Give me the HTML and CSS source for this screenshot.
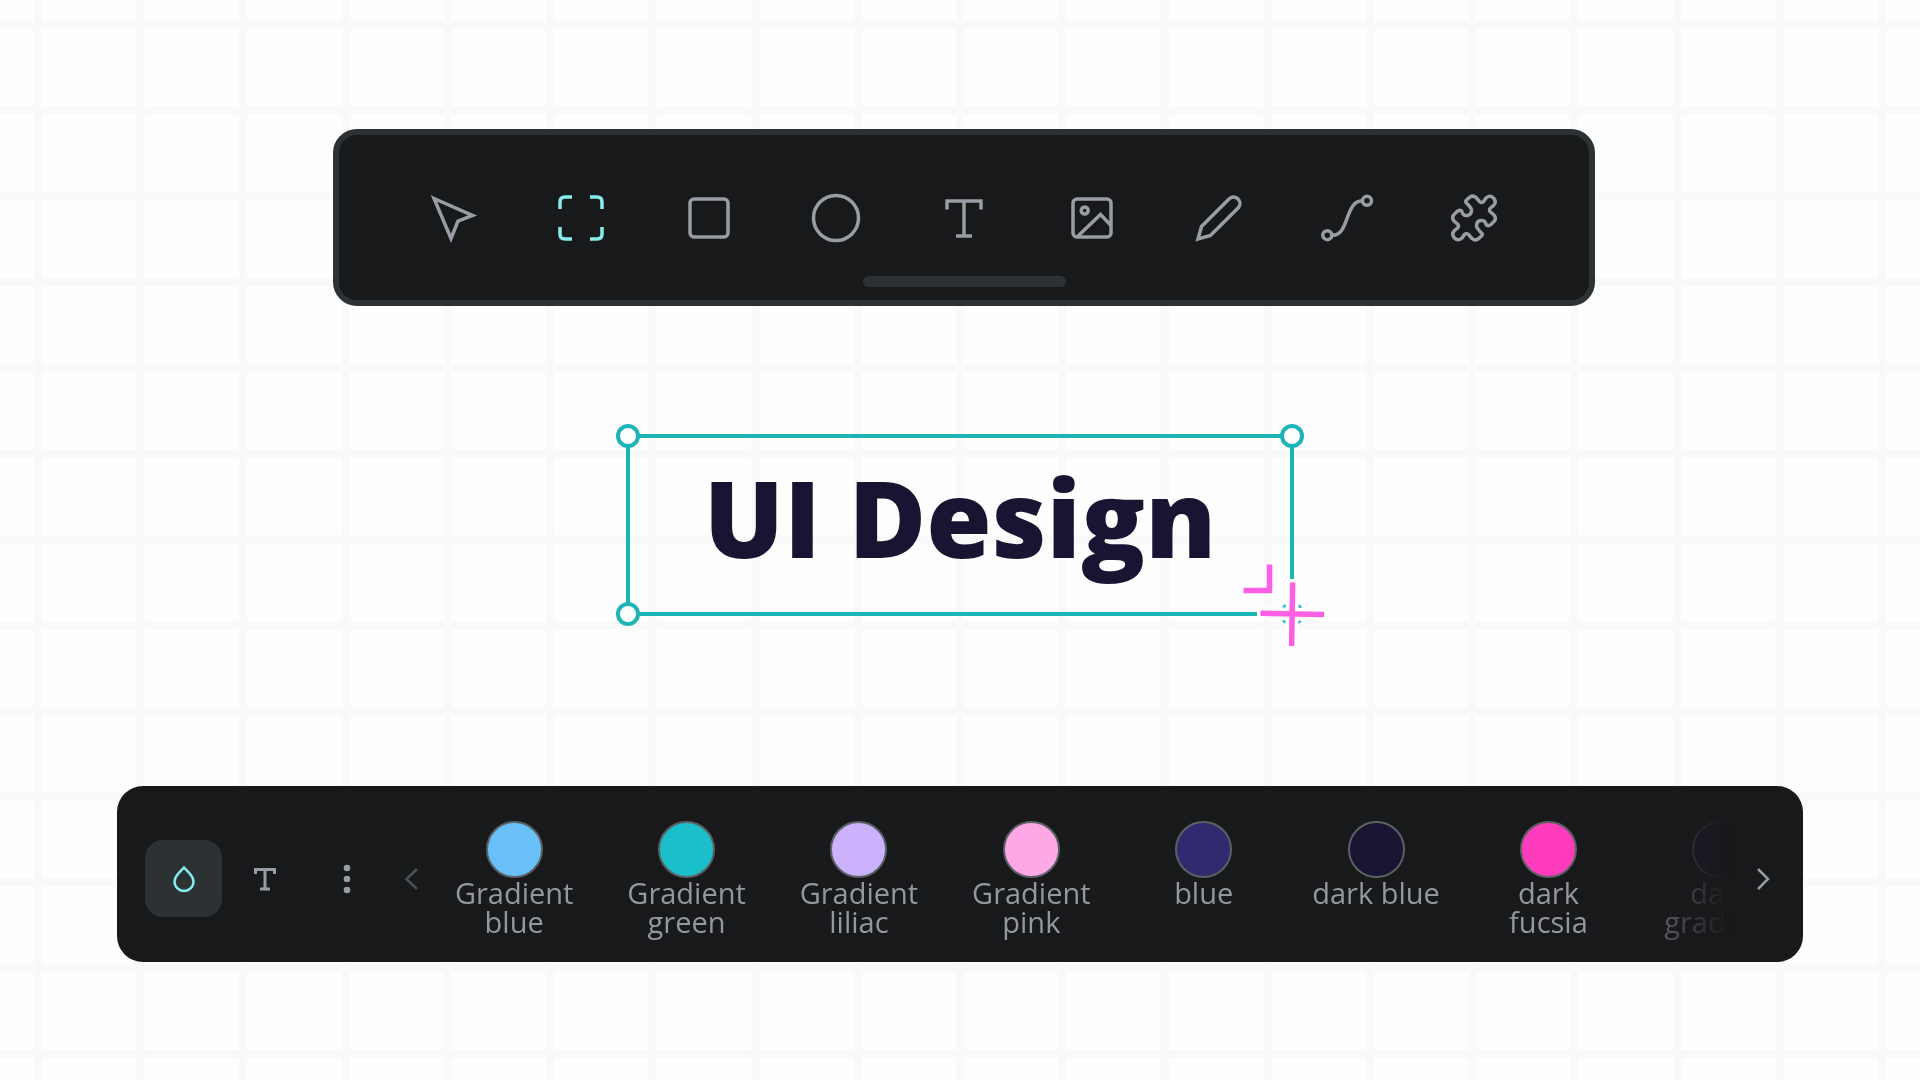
FILE: index.html
```html
<!DOCTYPE html>
<html lang="en">

<head>
    <meta charset="UTF-8">
    <meta name="viewport" content="width=device-width, initial-scale=1.0">
    <title>UI Design</title>
    <link rel="stylesheet" href="styles.css">
</head>

<body>
    <svg class="grid" aria-hidden="true">
        <defs>
            <pattern id="grid-cell" x="38" y="25" width="102.45" height="85.75" patternUnits="userSpaceOnUse">
                <path d="M0 0H102.45M0 85.75H102.45M0 0V85.75M102.45 0V85.75" stroke="#f9f9f9" stroke-width="8" />
            </pattern>
        </defs>
        <rect width="100%" height="100%" fill="url(#grid-cell)" />
    </svg>

    <main class="canvas">
        <div class="toolbar" role="toolbar" aria-label="Tools">
            <div class="tools">
                <button class="tool" aria-label="Move">
                    <svg class="icon" viewBox="0 0 56 56"><path d="M8 8.5L46.5 25.5L32 31L25 48.5Z" /></svg>
                </button>
                <button class="tool active" aria-label="Board">
                    <svg class="icon" viewBox="0 0 56 56"><path d="M7 19V12Q7 7 12 7H19M37 7H44Q49 7 49 12V19M49 37V44Q49 49 44 49H37M19 49H12Q7 49 7 44V37" /></svg>
                </button>
                <button class="tool" aria-label="Rectangle">
                    <svg class="icon" viewBox="0 0 56 56"><rect x="9" y="9" width="38" height="38" rx="4" /></svg>
                </button>
                <button class="tool" aria-label="Ellipse">
                    <svg class="icon" viewBox="0 0 56 56"><circle cx="28" cy="28" r="22.5" /></svg>
                </button>
                <button class="tool" aria-label="Text">
                    <svg class="icon" viewBox="0 0 56 56"><path d="M11 19.5V11H45V19.5M28 11V46M20 46H36" /></svg>
                </button>
                <button class="tool" aria-label="Image">
                    <svg class="icon" viewBox="0 0 56 56">
                        <rect x="9" y="9" width="38" height="38" rx="4" />
                        <circle cx="20.7" cy="20.5" r="3.5" />
                        <path d="M13.5 46.5L36.5 24.5L47 35.5" />
                    </svg>
                </button>
                <button class="tool" aria-label="Pencil">
                    <svg class="icon" viewBox="0 0 56 56"><path d="M38.5 8.5L10.5 36.5L7 49L19.5 45.5L47.5 17.5A6.4 6.4 0 0 0 38.5 8.5Z" /></svg>
                </button>
                <button class="tool" aria-label="Path">
                    <svg class="icon" viewBox="0 0 56 56">
                        <circle cx="48" cy="10.8" r="4.5" />
                        <circle cx="8.3" cy="45.2" r="4.5" />
                        <path d="M13 45.2C31 46 25 11 43.5 10.8" />
                    </svg>
                </button>
                <button class="tool" aria-label="Plugins">
                    <svg class="icon" viewBox="0 0 56 56"><path d="M20.5 13Q19 11.5 20.5 10L24 7Q27 5 30 7.5L33.5 11.5Q35.5 13.5 37.5 11.5L40 8Q44 4.5 47.5 8Q51 12 47.5 15.5L44.5 18Q42.5 20 44.5 22L48 25Q50.5 28 48.5 31L45 34.5Q42.5 36.5 40.5 35L39.5 33C38 29 30.5 29.5 30.5 36Q31 38.5 35.5 43Q37 44.5 35.5 46L32 49Q29 51 26 48.5L22.5 44.5Q20.5 42.5 18.5 44.5L16 48Q12 51.5 8.5 48Q5 44 8.5 40.5L11.5 38Q13.5 36 11.5 34L8 31Q5.5 28 7.5 25L11 21.5Q13.5 19.5 15.5 21L16.5 23C18 27 25.5 26.5 25.5 20Q25 17.5 20.5 13Z" /></svg>
                </button>
            </div>
            <div class="grip"></div>
        </div>

        <div class="selection">
            <h1 class="title">UI Design</h1>
            <span class="handle top-left"></span>
            <span class="handle top-right"></span>
            <span class="handle bottom-left"></span>
            <span class="handle bottom-right"></span>
            <svg class="cursor" viewBox="0 0 100 100" aria-hidden="true">
                <path class="cursor-halo" d="M50.5 15L49.5 85M15 49.5L85 50.5" />
                <path class="cursor-line" d="M50.7 18.5L49.6 82M18.5 49.3L82 50.5M27.5 .5V26.5H1.5" />
            </svg>
        </div>

        <div class="palette">
            <button class="palette-tab selected" aria-label="Colors">
                <svg class="icon-small" viewBox="0 0 32 32"><path d="M16 4.5C12 9 6.5 13 6.5 18.5A9.5 9.5 0 0 0 25.5 18.5C25.5 13 20 9 16 4.5Z" /></svg>
            </button>
            <button class="palette-tab" aria-label="Typographies">
                <svg class="icon-small icon-text" viewBox="0 0 32 32"><path d="M6.5 11V6.5H25.5V11M16 6.5V26M11 26H21" /></svg>
            </button>
            <button class="palette-more" aria-label="More options">
                <svg class="icon-small icon-dots" viewBox="0 0 32 32"><circle cx="16" cy="5" r="3.3" /><circle cx="16" cy="16" r="3.3" /><circle cx="16" cy="27" r="3.3" /></svg>
            </button>
            <button class="scroll-left" aria-label="Previous colors">
                <svg class="icon-small" viewBox="0 0 32 32"><path d="M26 6L15.5 16L26 26" /></svg>
            </button>
            <div class="swatches">
                <div class="swatch-list">
                    <button class="swatch"><span class="dot gradient-blue"></span>Gradient<br>blue</button>
                    <button class="swatch"><span class="dot gradient-green"></span>Gradient<br>green</button>
                    <button class="swatch"><span class="dot gradient-liliac"></span>Gradient<br>liliac</button>
                    <button class="swatch"><span class="dot gradient-pink"></span>Gradient<br>pink</button>
                    <button class="swatch"><span class="dot blue"></span>blue</button>
                    <button class="swatch"><span class="dot dark-blue"></span>dark blue</button>
                    <button class="swatch"><span class="dot dark-fucsia"></span>dark<br>fucsia</button>
                    <button class="swatch"><span class="dot dark-gradient"></span>dark<br>gradient</button>
                </div>
            </div>
            <button class="scroll-right" aria-label="Next colors">
                <svg class="icon-small" viewBox="0 0 32 32"><path d="M11 6L21 16L11 26" /></svg>
            </button>
        </div>
    </main>
</body>

</html>
```

FILE: styles.css
```css
* {
    box-sizing: border-box;
}

body {
    margin: 0;
    background: #fefefe;
    font-family: "Open Sans", sans-serif;
}

button {
    display: flex;
    align-items: center;
    justify-content: center;
    padding: 0;
    border: 0;
    background: none;
    color: #999ca4;
    font: inherit;
    cursor: pointer;
}

.grid {
    position: fixed;
    inset: 0;
    width: 100%;
    height: 100%;
    z-index: -1;
}

.canvas {
    display: flex;
    flex-direction: column;
    padding: 129px 117px 117px;
}

/* top toolbar */
.toolbar {
    display: flex;
    flex-direction: column;
    align-items: center;
    margin: 0 208px 0 216px;
    padding: 55px 51px 13px;
    border: 6px solid #2c3133;
    border-radius: 24px;
    background: #18191b;
}

.tools {
    display: grid;
    grid-template-columns: repeat(9, 1fr);
    width: 100%;
}

.icon,
.icon-small {
    fill: none;
    stroke: currentColor;
}

.icon {
    width: 56px;
    height: 56px;
    stroke-width: 3.5;
}

.tool.active {
    color: #86ecec;
}

.grip {
    width: 203px;
    height: 11px;
    margin-top: 30px;
    border-radius: 6px;
    background: #2c3133;
}

/* selected text layer */
.selection {
    position: relative;
    align-self: center;
    margin: 128px 0 170px;
    padding: 12px 74px 28px;
    border: 4px solid #1cb5b5;
}

.title {
    margin: 0;
    color: #181432;
    font-size: 106px;
    font-weight: 800;
    line-height: 134px;
    white-space: nowrap;
}

.handle {
    position: absolute;
    width: 24px;
    height: 24px;
    border: 4px solid #1cb5b5;
    border-radius: 50%;
    background: #fff;
}

.top-left {
    top: -14px;
    left: -14px;
}

.top-right {
    top: -14px;
    right: -14px;
}

.bottom-left {
    bottom: -14px;
    left: -14px;
}

.bottom-right {
    right: -14px;
    bottom: -14px;
}

.cursor {
    position: absolute;
    right: -52px;
    bottom: -52px;
    width: 100px;
    height: 100px;
    fill: none;
}

.cursor-halo {
    stroke: #fff;
    stroke-width: 13;
}

.cursor-line {
    stroke: #fc5fe3;
    stroke-width: 5.5;
}

/* color palette bar */
.palette {
    display: flex;
    align-items: center;
    padding: 35px 6px 26px 28px;
    border-radius: 26px;
    background: #18191b;
}

.icon-small {
    width: 32px;
    height: 32px;
    stroke-width: 2.5;
}

.icon-text {
    stroke-width: 3;
}

.icon-dots {
    fill: currentColor;
    stroke: none;
}

.palette-tab {
    width: 86px;
    height: 77px;
}

.palette-tab.selected {
    width: 77px;
    border-radius: 18px;
    background: #2c3133;
    color: #86ecec;
}

.palette-more {
    width: 78px;
    height: 77px;
}

.scroll-left {
    width: 42px;
    height: 77px;
    color: #4b5053;
}

.scroll-right {
    width: 68px;
    height: 77px;
}

/* the extra bottom padding keeps descenders from being clipped */
.swatches {
    flex: 1;
    min-width: 0;
    margin-bottom: -10px;
    padding-bottom: 10px;
    overflow: hidden;
    mask-image: linear-gradient(to right, #000 90%, transparent);
}

/* slightly wider than the bar so that the last color is cut off */
.swatch-list {
    display: grid;
    grid-template-columns: repeat(8, 1fr);
    width: 106%;
}

.swatch {
    flex-direction: column;
    justify-content: flex-start;
    color: #94979d;
    font-size: 29px;
    line-height: 29px;
}

.dot {
    width: 57px;
    height: 57px;
    border: 2px solid #5b6064;
    border-radius: 50%;
}

.gradient-blue {
    background: #69c0f8;
}

.gradient-green {
    background: #1bbfca;
}

.gradient-liliac {
    background: #ccb2fc;
}

.gradient-pink {
    background: #fea9e6;
}

.blue {
    background: #312a6e;
}

.dark-blue {
    background: #181432;
}

.dark-fucsia {
    background: #ff3cbc;
}

.dark-gradient {
    background: #1e1942;
}
```
